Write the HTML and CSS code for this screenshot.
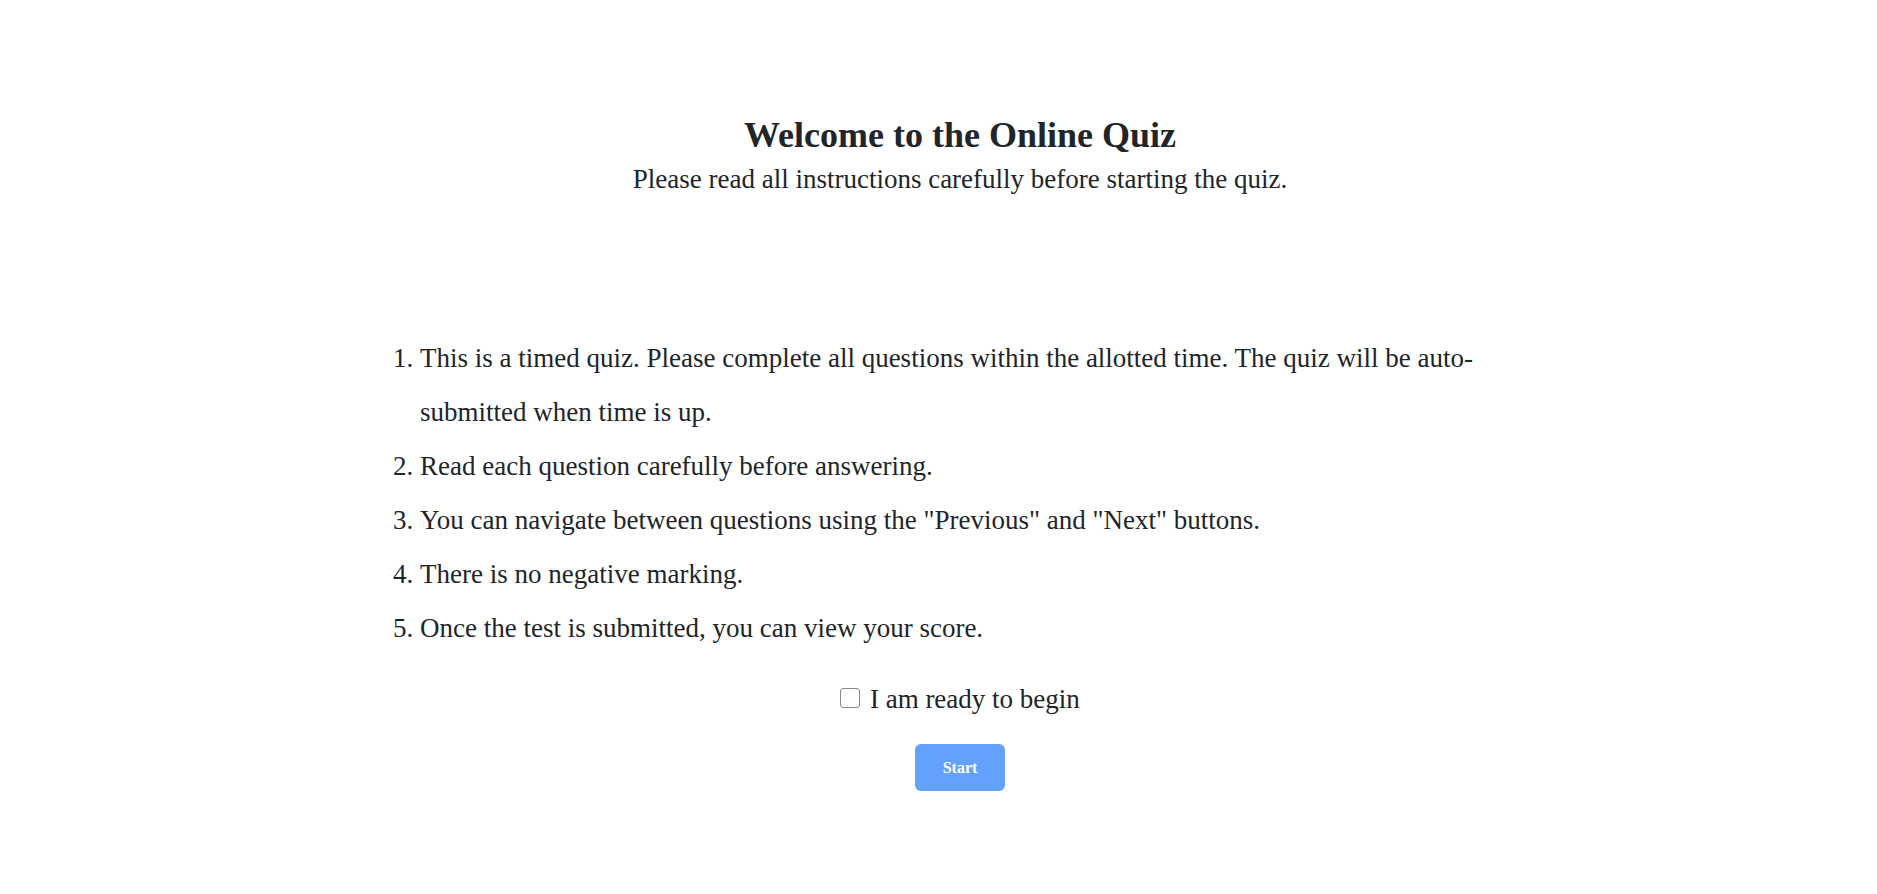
FILE: index.html
```html
<!DOCTYPE html>
<html lang="en">
<head>
<meta charset="utf-8">
<title>Online Quiz</title>
<link rel="stylesheet" href="styles.css">
</head>
<body>
<main class="page">
  <header class="intro">
    <h1 class="title">Welcome to the Online Quiz</h1>
    <p class="subtitle">Please read all instructions carefully before starting the quiz.</p>
  </header>
  <ol class="rules">
    <li>This is a timed quiz. Please complete all questions within the allotted time. The quiz will be auto-submitted when time is up.</li>
    <li>Read each question carefully before answering.</li>
    <li>You can navigate between questions using the "Previous" and "Next" buttons.</li>
    <li>There is no negative marking.</li>
    <li>Once the test is submitted, you can view your score.</li>
  </ol>
  <div class="ready">
    <label class="ready-label"><input type="checkbox" class="ready-box"> I am ready to begin</label>
  </div>
  <div class="actions">
    <button class="start-btn" type="button" disabled>Start</button>
  </div>
</main>
</body>
</html>
```
FILE: styles.css
```css
html, body {
  margin: 0;
  padding: 0;
  background: #ffffff;
}

body {
  font-family: "Liberation Serif", "Times New Roman", serif;
  color: #212529;
}

.page {
  width: 1160px;
  margin: 0 auto;
  padding: 114px 4px 0 47px;
}

.intro {
  text-align: center;
}

.title {
  font-size: 36px;
  font-weight: bold;
  line-height: normal;
  margin: 0 0 8px;
}

.subtitle {
  font-size: 27px;
  line-height: normal;
  margin: 0;
}

.rules {
  margin: 136px 0 0;
  padding-left: 40px;
  font-size: 27px;
  line-height: 2;
}

.ready {
  margin-top: 29px;
  text-align: center;
  font-size: 27px;
  line-height: normal;
}

.ready-box {
  appearance: none;
  -webkit-appearance: none;
  width: 20px;
  height: 20px;
  margin: 0 3px 0 0;
  border: 1px solid #8a8a8a;
  border-radius: 3px;
  background: #ffffff;
  vertical-align: baseline;
  box-sizing: border-box;
}

.actions {
  margin-top: 29px;
  text-align: center;
}

.start-btn {
  width: 90px;
  height: 47px;
  border: none;
  border-radius: 6px;
  background: #62a1fe;
  color: #ffffff;
  font-family: "Liberation Serif", "Times New Roman", serif;
  font-size: 16px;
  font-weight: bold;
  padding: 0;
}
```
